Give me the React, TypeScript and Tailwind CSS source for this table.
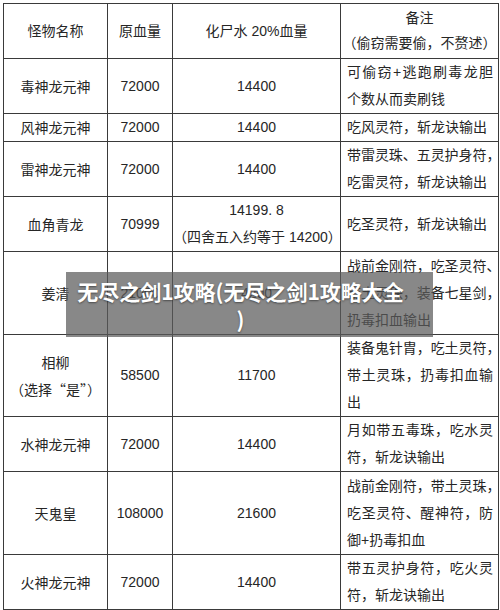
import React from 'react';

type Row = {
  name: string[];
  hp: string;
  hp20: string[];
  note: string[];
  h: string;
};

const rows: Row[] = [
  { name: ['毒神龙元神'], hp: '72000', hp20: ['14400'], note: ['可偷窃+逃跑刷毒龙胆', '个数从而卖刷钱'], h: 'h-[55px]' },
  { name: ['风神龙元神'], hp: '72000', hp20: ['14400'], note: ['吃风灵符，斩龙诀输出'], h: 'h-[28px]' },
  { name: ['雷神龙元神'], hp: '72000', hp20: ['14400'], note: ['带雷灵珠、五灵护身符，', '吃雷灵符，斩龙诀输出'], h: 'h-[54px]' },
  { name: ['血角青龙'], hp: '70999', hp20: ['14199. 8', '（四舍五入约等于 14200）'], note: ['吃圣灵符，斩龙诀输出'], h: 'h-[55px]' },
  { name: ['姜清'], hp: '21000', hp20: ['4200'], note: ['战前金刚符，吃圣灵符、', '带土灵珠，装备七星剑，', '扔毒扣血输出'], h: 'h-[83px]' },
  { name: ['相柳', '（选择“是”）'], hp: '58500', hp20: ['11700'], note: ['装备鬼针胄，吃土灵符，', '带土灵珠，扔毒扣血输', '出'], h: 'h-[80px]' },
  { name: ['水神龙元神'], hp: '72000', hp20: ['14400'], note: ['月如带五毒珠，吃水灵', '符，斩龙诀输出'], h: 'h-[55px]' },
  { name: ['天鬼皇'], hp: '108000', hp20: ['21600'], note: ['战前金刚符，带土灵珠，', '吃圣灵符、醒神符，防', '御+扔毒扣血'], h: 'h-[83px]' },
  { name: ['火神龙元神'], hp: '72000', hp20: ['14400'], note: ['带五灵护身符，吃火灵', '符，斩龙诀输出'], h: 'h-[54px]' },
];

// 11-char lines only fit when the trailing punctuation is half width
const NoteLine = ({ text, last }: { text: string; last: boolean }) => {
  const align = last ? 'text-left' : 'text-justify [text-align-last:justify]';
  if (text.length < 11) return <div className={align}>{text}</div>;
  return (
    <div className={align + ' tracking-[-0.4px]'}>
      {text.slice(0, -1)}
      <span className='[font-feature-settings:"halt"]'>{text.slice(-1)}</span>
    </div>
  );
};

const cell = 'border border-[#3a3a3a] text-center align-middle p-0';
const cjk = "[font-family:'Noto_Sans_CJK_SC',sans-serif]";

export default function App() {
  return (
    <div className="relative w-[500px] h-[610px] bg-white overflow-hidden text-[14px] leading-[27px] text-[#262626] [font-family:'Liberation_Sans','Noto_Sans_CJK_SC',sans-serif]">
      <div className="pt-[3px] pl-[3px]">
        <table className="table-fixed border-collapse w-[495px]">
          <colgroup>
            <col className="w-[104px]" />
            <col className="w-[65px]" />
            <col className="w-[168px]" />
            <col className="w-[158px]" />
          </colgroup>
          <tbody>
            <tr className="h-[55px]">
              <td className={cell}>怪物名称</td>
              <td className={cell}>原血量</td>
              <td className={cell}>化尸水 20%血量</td>
              <td className={cell + ' leading-[25px]'}>
                <div>备注</div>
                <div>
                  <span className='[font-feature-settings:"halt"]'>（</span>
                  偷窃需要偷，不赘述
                  <span className='[font-feature-settings:"halt"]'>）</span>
                </div>
              </td>
            </tr>
            {rows.map((r, i) => (
              <tr key={i} className={r.h}>
                <td className={cell + ' ' + cjk}>
                  {r.name.map((t) => (
                    <div key={t}>{t}</div>
                  ))}
                </td>
                <td className={cell}>{r.hp}</td>
                <td className={cell}>
                  {r.hp20.map((t) => (
                    <div key={t}>{t}</div>
                  ))}
                </td>
                <td className="border border-[#3a3a3a] align-middle pl-[6px] pr-[5px] py-0">
                  {r.note.map((t, j) => (
                    <NoteLine key={j} text={t} last={j === r.note.length - 1} />
                  ))}
                </td>
              </tr>
            ))}
          </tbody>
        </table>
        <div className="flex items-start h-[5px]">
          <div className="ml-[6px] w-[2px] h-[5px] bg-[#222]" />
          <div className="ml-[223px] w-[28px] h-[5px] border border-[#d4d4d4] bg-[#f2f2f2]" />
        </div>
      </div>

      <div className="absolute left-[66px] top-[272px] w-[367px] h-[65px] bg-[rgba(90,90,90,0.72)] flex flex-col items-center justify-center pl-0 pr-[18px] text-white font-bold text-[21px] leading-[28px] [font-family:'Noto_Sans_CJK_SC',sans-serif] [text-shadow:0_1px_2px_rgba(0,0,0,0.45)]">
        <div className="whitespace-nowrap">无尽之剑1攻略(无尽之剑1攻略大全</div>
        <div>)</div>
      </div>
    </div>
  );
}
